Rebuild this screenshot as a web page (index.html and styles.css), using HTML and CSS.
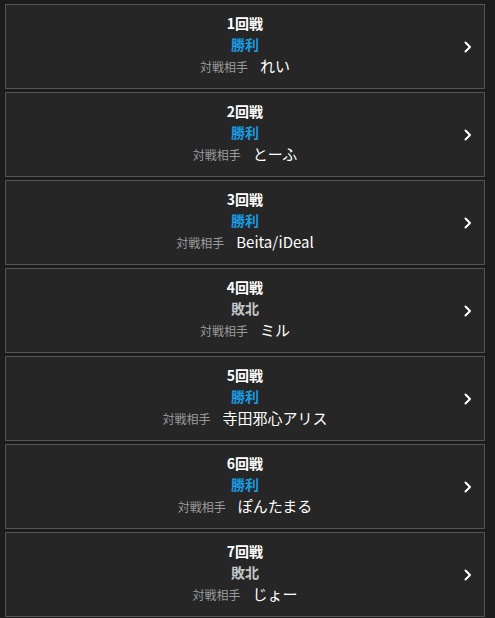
FILE: index.html
```html
<!DOCTYPE html>
<html lang="ja">
<head>
<meta charset="utf-8">
<link rel="stylesheet" href="styles.css">
</head>
<body>
<div class="list">
  <div class="card"><div class="info"><div class="round">1回戦</div><div class="result win">勝利</div><div class="opp"><span class="label">対戦相手</span><span class="name">れい</span></div></div><svg class="chev" viewBox="0 0 8 12"><path d="M1.5 1.5 L6 6 L1.5 10.5"/></svg></div>
  <div class="card"><div class="info"><div class="round">2回戦</div><div class="result win">勝利</div><div class="opp"><span class="label">対戦相手</span><span class="name">とーふ</span></div></div><svg class="chev" viewBox="0 0 8 12"><path d="M1.5 1.5 L6 6 L1.5 10.5"/></svg></div>
  <div class="card"><div class="info"><div class="round">3回戦</div><div class="result win">勝利</div><div class="opp"><span class="label">対戦相手</span><span class="name">Beita/iDeal</span></div></div><svg class="chev" viewBox="0 0 8 12"><path d="M1.5 1.5 L6 6 L1.5 10.5"/></svg></div>
  <div class="card"><div class="info"><div class="round">4回戦</div><div class="result lose">敗北</div><div class="opp"><span class="label">対戦相手</span><span class="name">ミル</span></div></div><svg class="chev" viewBox="0 0 8 12"><path d="M1.5 1.5 L6 6 L1.5 10.5"/></svg></div>
  <div class="card"><div class="info"><div class="round">5回戦</div><div class="result win">勝利</div><div class="opp"><span class="label">対戦相手</span><span class="name">寺田邪心アリス</span></div></div><svg class="chev" viewBox="0 0 8 12"><path d="M1.5 1.5 L6 6 L1.5 10.5"/></svg></div>
  <div class="card"><div class="info"><div class="round">6回戦</div><div class="result win">勝利</div><div class="opp"><span class="label">対戦相手</span><span class="name">ぽんたまる</span></div></div><svg class="chev" viewBox="0 0 8 12"><path d="M1.5 1.5 L6 6 L1.5 10.5"/></svg></div>
  <div class="card"><div class="info"><div class="round">7回戦</div><div class="result lose">敗北</div><div class="opp"><span class="label">対戦相手</span><span class="name">じょー</span></div></div><svg class="chev" viewBox="0 0 8 12"><path d="M1.5 1.5 L6 6 L1.5 10.5"/></svg></div>
</div>
</body>
</html>
```
FILE: styles.css
```css
html, body {
  margin: 0;
  padding: 0;
  background: #1c1c1c;
  font-family: "Noto Sans CJK JP", "Noto Sans", sans-serif;
  overflow: hidden;
}
.list {
  display: flex;
  flex-direction: column;
  gap: 3px;
  padding: 4px 10px 0 5px;
}
.card {
  position: relative;
  height: 83px;
  border: 1px solid #555;
  background: #262626;
  display: flex;
  align-items: center;
  justify-content: center;
}
.info {
  display: flex;
  flex-direction: column;
  align-items: center;
  padding-bottom: 5px;
}
.round, .result, .opp {
  height: 22px;
  line-height: 22px;
}
.result {
  height: 21px;
  line-height: 21px;
}
.round {
  color: #fff;
  font-weight: bold;
  font-size: 14px;
}
.result {
  font-weight: bold;
  font-size: 14px;
}
.win { color: #1a9be2; }
.lose { color: #c2c6c9; }
.opp {
  display: flex;
  align-items: baseline;
  gap: 12px;
}
.label {
  color: #9a9a9a;
  font-size: 12px;
}
.name {
  color: #fff;
  font-size: 15px;
}
.chev {
  position: absolute;
  right: 12px;
  top: 50%;
  margin-top: -6px;
  width: 8px;
  height: 12px;
  fill: none;
  stroke: #fff;
  stroke-width: 2;
  stroke-linecap: round;
  stroke-linejoin: round;
}
```
